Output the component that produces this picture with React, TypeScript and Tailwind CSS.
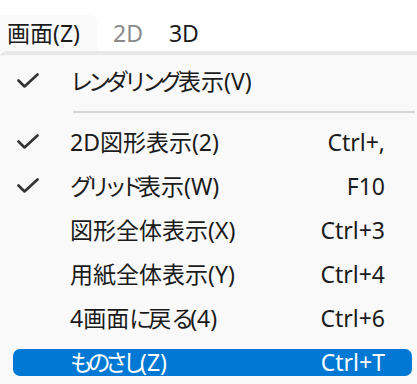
import React from "react";

type Item = {
  label: React.ReactNode;
  shortcut?: string;
  checked?: boolean;
  active?: boolean;
  separatorAfter?: boolean;
};

// kana in the original UI font are set proportionally, so narrow them a little
const Kana = ({ children, t }: { children: React.ReactNode; t: string }) => (
  <span className={t}>{children}</span>
);

const items: Item[] = [
  {
    label: (
      <>
        <Kana t="tracking-[-5px]">レンダリング</Kana>表示(V)
      </>
    ),
    checked: true,
    separatorAfter: true,
  },
  { label: "2D図形表示(2)", shortcut: "Ctrl+,", checked: true },
  {
    label: (
      <>
        <Kana t="tracking-[-6px]">グリッド</Kana>表示(W)
      </>
    ),
    shortcut: "F10",
    checked: true,
  },
  { label: "図形全体表示(X)", shortcut: "Ctrl+3" },
  { label: "用紙全体表示(Y)", shortcut: "Ctrl+4" },
  {
    label: (
      <>
        4画面<Kana t="tracking-[-4px]">に</Kana>戻<Kana t="tracking-[-4px]">る</Kana>(4)
      </>
    ),
    shortcut: "Ctrl+6",
  },
  {
    label: (
      <>
        <Kana t="tracking-[-5.5px]">ものさし</Kana>(Z)
      </>
    ),
    shortcut: "Ctrl+T",
    active: true,
  },
];

function Check() {
  return (
    <svg width="22" height="16" viewBox="0 0 22 16" fill="none">
      <path
        d="M1.5 7.5 L7.5 13.5 L20.5 1.5"
        stroke="#333333"
        strokeWidth="2.6"
        strokeLinecap="round"
        strokeLinejoin="round"
      />
    </svg>
  );
}

function MenuRow({ item }: { item: Item }) {
  return (
    <div className="h-[44px] flex items-center">
      <div
        className={
          "flex flex-1 items-center h-[27px] ml-[13px] mr-[5px] rounded-[7px] pl-[4px] pr-[27px] " +
          (item.active ? "bg-[#0078d4] text-white" : "text-[#1b1b1b]")
        }
      >
        <div className="w-[53px] flex items-center">{item.checked && <Check />}</div>
        <span className="flex-1 leading-none whitespace-nowrap">{item.label}</span>
        {item.shortcut && <span className="leading-none">{item.shortcut}</span>}
      </div>
    </div>
  );
}

export default function App() {
  return (
    <div
      className="w-[417px] h-[384px] overflow-hidden bg-white text-[23px] text-[#1b1b1b]"
      style={{ fontFamily: '"Noto Sans", "Noto Sans CJK JP", sans-serif' }}
    >
      {/* menu bar */}
      <div className="h-[51px] flex items-end">
        <div className="h-[36px] w-[97px] bg-[#f9f9f9] rounded-tr-[6px] pl-[7px] flex items-center">
          画面(Z)
        </div>
        <div className="h-[36px] ml-[16px] flex items-center text-[#8a8a8a]">2D</div>
        <div className="h-[36px] ml-[26px] flex items-center">3D</div>
      </div>

      {/* dropdown */}
      <div className="border-t-[4px] border-[#e8e8e8] bg-[#f9f9f9] rounded-tl-[6px] pt-[4px] h-[333px]">
        {items.map((item, i) => (
          <div key={i}>
            <MenuRow item={item} />
            {item.separatorAfter && (
              <div className="pt-[8px] pb-[7px]">
                <div className="h-[2px] ml-[73px] mr-[2px] bg-[#d6d6d6]" />
              </div>
            )}
          </div>
        ))}
      </div>
    </div>
  );
}
